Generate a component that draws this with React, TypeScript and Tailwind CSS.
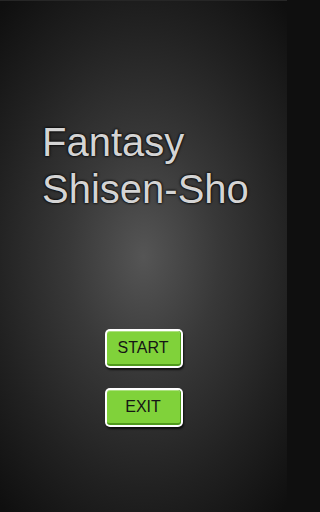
import * as React from "react";

type MenuButtonProps = {
  label: string;
};

const MenuButton: React.FC<MenuButtonProps> = ({ label }) => (
  <button className="w-[78px] h-[39px] rounded-[5px] bg-white p-[2px] shadow-[1px_2px_2px_rgba(0,0,0,0.7)]">
    <span className="flex h-full w-full items-center justify-center rounded-[3px] border-b-[2px] border-r border-[#4f9a1c] bg-[#80d23a] text-[16px] text-[#151515] font-['Liberation_Sans',Arial,sans-serif] shadow-[inset_0_1px_0_rgba(255,255,255,0.35)]">
      {label}
    </span>
  </button>
);

export default function App() {
  return (
    <div className="min-h-[512px] w-full bg-[#0f0f0f]">
      <div className="relative flex h-[512px] w-[287px] flex-col overflow-hidden bg-[radial-gradient(ellipse_75%_65%_at_50%_50%,#555555_0%,#383838_35%,#212121_70%,#0f0f0f_100%)] border-t border-[#262626]">
        <h1 className="pl-[42px] pt-[118px] text-[40px] leading-[47px] font-normal text-[#d4d4d4] font-['Liberation_Sans',Arial,sans-serif] [text-shadow:0_0_3px_#000,0_0_2px_#000]">
          Fantasy
          <br />
          Shisen-Sho
        </h1>
        <div className="mt-[116px] flex flex-col items-center gap-[20px]">
          <MenuButton label="START" />
          <MenuButton label="EXIT" />
        </div>
      </div>
    </div>
  );
}
